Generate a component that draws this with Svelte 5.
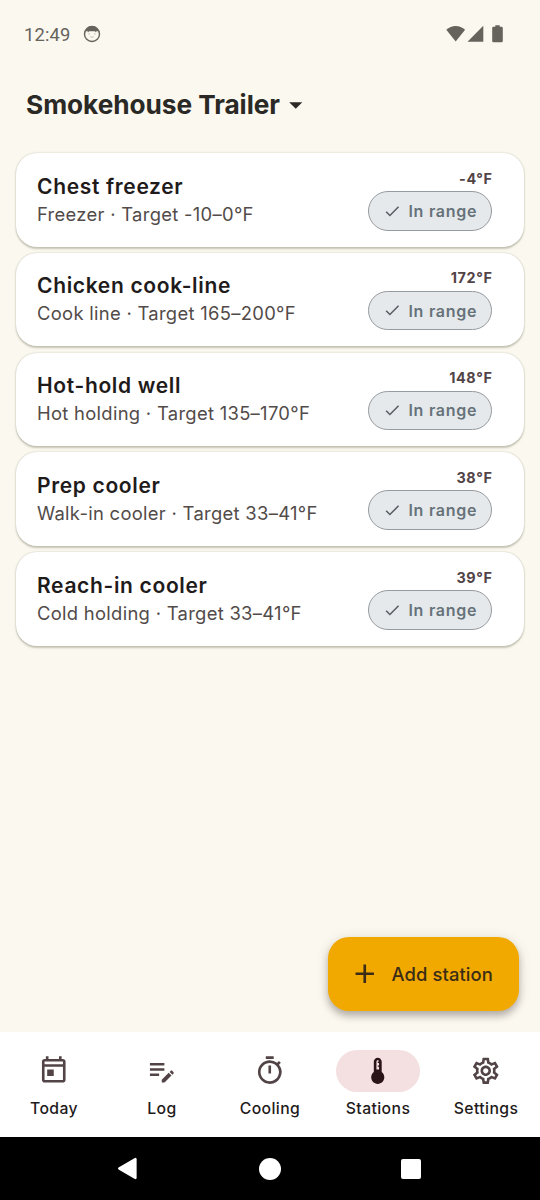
<script lang="ts">
  interface Station {
    name: string;
    kind: string;
    target: string;
    reading: string;
  }

  const stations: Station[] = [
    { name: "Chest freezer", kind: "Freezer", target: "-10–0°F", reading: "-4°F" },
    { name: "Chicken cook-line", kind: "Cook line", target: "165–200°F", reading: "172°F" },
    { name: "Hot-hold well", kind: "Hot holding", target: "135–170°F", reading: "148°F" },
    { name: "Prep cooler", kind: "Walk-in cooler", target: "33–41°F", reading: "38°F" },
    { name: "Reach-in cooler", kind: "Cold holding", target: "33–41°F", reading: "39°F" },
  ];

  const tabs = [
    {
      label: "Today",
      icon: "M19 3h-1V1h-2v2H8V1H6v2H5c-1.11 0-1.99.9-1.99 2L3 19c0 1.1.89 2 2 2h14c1.1 0 2-.9 2-2V5c0-1.1-.9-2-2-2zm0 16H5V9h14v10zm0-12H5V5h14v2zM7 11h5v5H7z",
    },
    {
      label: "Log",
      icon: "M3 10h11v2H3v-2zm0-2h11V6H3v2zm0 8h7v-2H3v2zm15.01-3.13.71-.71c.39-.39 1.02-.39 1.41 0l.71.71c.39.39.39 1.02 0 1.41l-.71.71-2.12-2.12zm-.71.71-5.3 5.3V21h2.12l5.3-5.3-2.12-2.12z",
    },
    {
      label: "Cooling",
      icon: "M9 1h6v2H9V1zm10.03 6.39 1.42-1.42c-.43-.51-.9-.99-1.41-1.41l-1.42 1.42A8.962 8.962 0 0 0 12 4c-4.97 0-9 4.03-9 9s4.02 9 9 9a8.994 8.994 0 0 0 7.03-14.61zM12 20c-3.87 0-7-3.13-7-7s3.13-7 7-7 7 3.13 7 7-3.13 7-7 7zm-1-12h2v6h-2V8z",
    },
    {
      label: "Stations",
      icon: "M15 13V5c0-1.66-1.34-3-3-3S9 3.34 9 5v8c-1.21.91-2 2.37-2 4 0 2.76 2.24 5 5 5s5-2.24 5-5c0-1.63-.79-3.09-2-4zm-4-8c0-.55.45-1 1-1s1 .45 1 1h-1v1h1v2h-1v1h1v2h-2V5z",
    },
    {
      label: "Settings",
      icon: "M19.43 12.98c.04-.32.07-.64.07-.98 0-.34-.03-.66-.07-.98l2.11-1.65c.19-.15.24-.42.12-.64l-2-3.46c-.09-.16-.26-.25-.44-.25-.06 0-.12.01-.17.03l-2.49 1c-.52-.4-1.08-.73-1.69-.98l-.38-2.65C14.46 2.18 14.25 2 14 2h-4c-.25 0-.46.18-.49.42l-.38 2.65c-.61.25-1.17.59-1.69.98l-2.49-1c-.06-.02-.12-.03-.18-.03-.17 0-.34.09-.43.25l-2 3.46c-.13.22-.07.49.12.64l2.11 1.65c-.04.32-.07.65-.07.98 0 .33.03.66.07.98l-2.11 1.65c-.19.15-.24.42-.12.64l2 3.46c.09.16.26.25.44.25.06 0 .12-.01.17-.03l2.49-1c.52.4 1.08.73 1.69.98l.38 2.65c.03.24.24.42.49.42h4c.25 0 .46-.18.49-.42l.38-2.65c.61-.25 1.17-.59 1.69-.98l2.49 1c.06.02.12.03.18.03.17 0 .34-.09.43-.25l2-3.46c.12-.22.07-.49-.12-.64l-2.11-1.65zm-1.98-1.71c.04.31.05.52.05.73 0 .21-.02.43-.05.73l-.14 1.13.89.7 1.08.84-.7 1.21-1.27-.51-1.04-.42-.9.68c-.43.32-.84.56-1.25.73l-1.06.43-.16 1.13-.2 1.35h-1.4l-.19-1.35-.16-1.13-1.06-.43c-.43-.18-.83-.41-1.23-.71l-.91-.7-1.06.43-1.27.51-.7-1.21 1.08-.84.89-.7-.14-1.13c-.03-.31-.05-.54-.05-.74s.02-.43.05-.73l.14-1.13-.89-.7-1.08-.84.7-1.21 1.27.51 1.04.42.9-.68c.43-.32.84-.56 1.25-.73l1.06-.43.16-1.13.2-1.35h1.39l.19 1.35.16 1.13 1.06.43c.43.18.83.41 1.23.71l.91.7 1.06-.43 1.27-.51.7 1.21-1.07.85-.89.7.14 1.13zM12 8c-2.21 0-4 1.79-4 4s1.79 4 4 4 4-1.79 4-4-1.79-4-4-4zm0 6c-1.1 0-2-.9-2-2s.9-2 2-2 2 .9 2 2-.9 2-2 2z",
    },
  ];

  let active = $state("Stations");
</script>

<div class="screen">
  <div class="status">
    <span class="clock">12:49</span>
    <svg class="face" viewBox="0 0 18 18">
      <circle cx="9" cy="9" r="7.5" fill="none" stroke="currentColor" stroke-width="1.4" />
      <path d="M2.300 7C3 3.500 5.500 1.500 9 1.500S15 3.500 15.700 7L13.800 5.800 13 7.600 12 6.200H6L5 7.600 4.200 5.800z" fill="currentColor" />
      <path d="M5.500 9h1.500M11 9h1.500M7.300 11.800q1.700.8 3.400 0" fill="none" stroke="currentColor" stroke-width="0.8" opacity="0.5" />
    </svg>
    <svg class="signals" viewBox="0 0 58 18">
      <path d="M0.300 4.800C5.500-.4 13.900-.4 19.100 4.800L9.700 16.500z" />
      <path d="M21.500 16.800 37.300.8v16z" />
      <path d="M49.300.3h4.400v1.500h1.800q1.300 0 1.300 1.300v12.800q0 1.300-1.300 1.300h-8q-1.300 0-1.300-1.300V3.100q0-1.300 1.300-1.300h1.800z" />
    </svg>
  </div>

  <header>
    <h1>Smokehouse Trailer</h1>
    <svg class="icon" viewBox="0 0 24 24"><path d="M7 10l5 5 5-5z" /></svg>
  </header>

  <main>
    {#each stations as s}
      <article class="card">
        <div class="info">
          <h2>{s.name}</h2>
          <p>{s.kind} · Target {s.target}</p>
        </div>
        <div class="side">
          <span class="reading">{s.reading}</span>
          <span class="chip">
            <svg viewBox="0 0 24 24"><path d="M9 16.170 4.830 12l-1.420 1.410L9 19 21 7l-1.410-1.410z" /></svg>
            <span>In range</span>
          </span>
        </div>
      </article>
    {/each}
  </main>

  <button type="button" class="fab">
    <svg class="icon" viewBox="0 0 24 24"><path d="M19 13h-6v6h-2v-6H5v-2h6V5h2v6h6v2z" /></svg>
    <span>Add station</span>
  </button>

  <nav>
    {#each tabs as tab}
      <button
        type="button"
        class="tab"
        class:active={active === tab.label}
        onclick={() => (active = tab.label)}
      >
        <span class="pill"><svg class="icon" viewBox="0 0 24 24"><path d={tab.icon} /></svg></span>
        <span class="label">{tab.label}</span>
      </button>
    {/each}
  </nav>

  <div class="system">
    <svg viewBox="0 0 22 24"><path d="M2 10.700 18.200 1.200Q20.500 0 20.500 2.500v19Q20.500 24 18.200 22.800L2 13.300Q0 12 2 10.700z" /></svg>
    <svg viewBox="0 0 22 22"><circle cx="11" cy="11" r="11" /></svg>
    <svg viewBox="0 0 20 20"><rect width="20" height="20" rx="2" /></svg>
  </div>
</div>

<style>
  :global(body) {
    background: #fbf8ef;
  }
  .screen {
    position: relative;
    display: flex;
    flex-direction: column;
    width: 540px;
    height: 1200px;
    overflow: hidden;
    background: #fbf8ef;
    font-family: Inter, "Liberation Sans", sans-serif;
    color: #1f1b1b;
  }
  h1,
  h2,
  p {
    margin: 0;
    white-space: nowrap;
  }
  button {
    border: 0;
    padding: 0;
    background: none;
    color: inherit;
    font: inherit;
    cursor: pointer;
  }
  svg {
    display: block;
    flex: none;
    fill: currentColor;
  }
  .icon {
    width: 31.5px;
    height: 31.5px;
  }

  .status {
    display: flex;
    align-items: center;
    height: 68px;
    padding: 0 36px 0 24px;
    color: #66635d;
  }
  .clock {
    width: 59px;
    padding-top: 1px;
    font: 400 18.4px Roboto, sans-serif;
    letter-spacing: 0.15px;
  }
  .face {
    width: 18px;
    height: 18px;
  }
  .signals {
    width: 58px;
    height: 18px;
    margin-left: auto;
  }

  header {
    display: flex;
    align-items: center;
    height: 73px;
    padding-left: 26px;
    color: #2a2925;
  }
  h1 {
    font-size: 26.25px;
    font-weight: 700;
    letter-spacing: -0.06px;
  }

  main {
    display: flex;
    flex-direction: column;
    gap: 6.25px;
    padding: 12px 16px 0;
  }
  .card {
    display: flex;
    justify-content: space-between;
    height: 93.5px;
    padding: 0 32px 0 21px;
    border-radius: 21px;
    background: #fff;
    box-shadow: 0 1.5px 2px rgba(60, 58, 30, 0.25), 0 0 2px rgba(60, 58, 30, 0.22);
    box-sizing: border-box;
  }
  .info {
    padding-top: 18.5px;
  }
  h2 {
    font-size: 21px;
    font-weight: 600;
    line-height: 29px;
    letter-spacing: 0.66px;
  }
  p {
    color: #524b49;
    font-size: 18.4px;
    line-height: 27.5px;
    letter-spacing: 0.3px;
  }
  .side {
    display: flex;
    flex-direction: column;
    align-items: flex-end;
    padding-top: 15.5px;
  }
  .reading {
    margin-right: -0.5px;
    color: #524446;
    font-size: 14.4px;
    font-weight: 700;
    line-height: 20px;
    letter-spacing: 0.6px;
  }
  .chip {
    display: flex;
    align-items: center;
    gap: 7.5px;
    width: 124.5px;
    height: 39.5px;
    margin-top: 2.5px;
    padding-left: 14px;
    border: 1px solid #969b9f;
    border-radius: 20px;
    background: #e6e9eb;
    color: #66727a;
    font-size: 16px;
    font-weight: 600;
    letter-spacing: 0.75px;
    white-space: nowrap;
    box-sizing: border-box;
  }
  .chip svg {
    width: 18.4px;
    height: 18.4px;
    color: #555d62;
  }

  .fab {
    position: absolute;
    right: 21px;
    bottom: 189.5px;
    display: flex;
    align-items: center;
    gap: 11px;
    width: 191px;
    height: 73.5px;
    padding-left: 21px;
    border-radius: 21px;
    background: #f1a900;
    box-shadow: 0 5px 7px rgba(40, 30, 30, 0.28), 0 2px 14px rgba(40, 30, 30, 0.12);
    color: #3a2c16;
    font-size: 18.4px;
    font-weight: 500;
    letter-spacing: 0.1px;
    white-space: nowrap;
    box-sizing: border-box;
  }

  nav {
    display: flex;
    height: 105px;
    margin-top: auto;
    background: #fff;
  }
  .tab {
    display: flex;
    flex: 1;
    flex-direction: column;
    align-items: center;
    padding-top: 17.5px;
  }
  .pill {
    display: flex;
    align-items: center;
    justify-content: center;
    width: 84px;
    height: 42px;
    border-radius: 21px;
    color: #524446;
  }
  .active .pill {
    background: #f5e0e1;
    color: #2a1417;
  }
  .label {
    margin-top: 6px;
    font-size: 15.75px;
    font-weight: 500;
    line-height: 21px;
    letter-spacing: 0.4px;
  }

  .system {
    display: flex;
    align-items: center;
    justify-content: space-between;
    height: 63px;
    padding: 0 119px 0 117px;
    background: #000;
    color: #fff;
  }
  .system svg {
    height: 22px;
  }
  .system svg:first-child {
    height: 23px;
  }
  .system svg:last-child {
    height: 20px;
  }
</style>
